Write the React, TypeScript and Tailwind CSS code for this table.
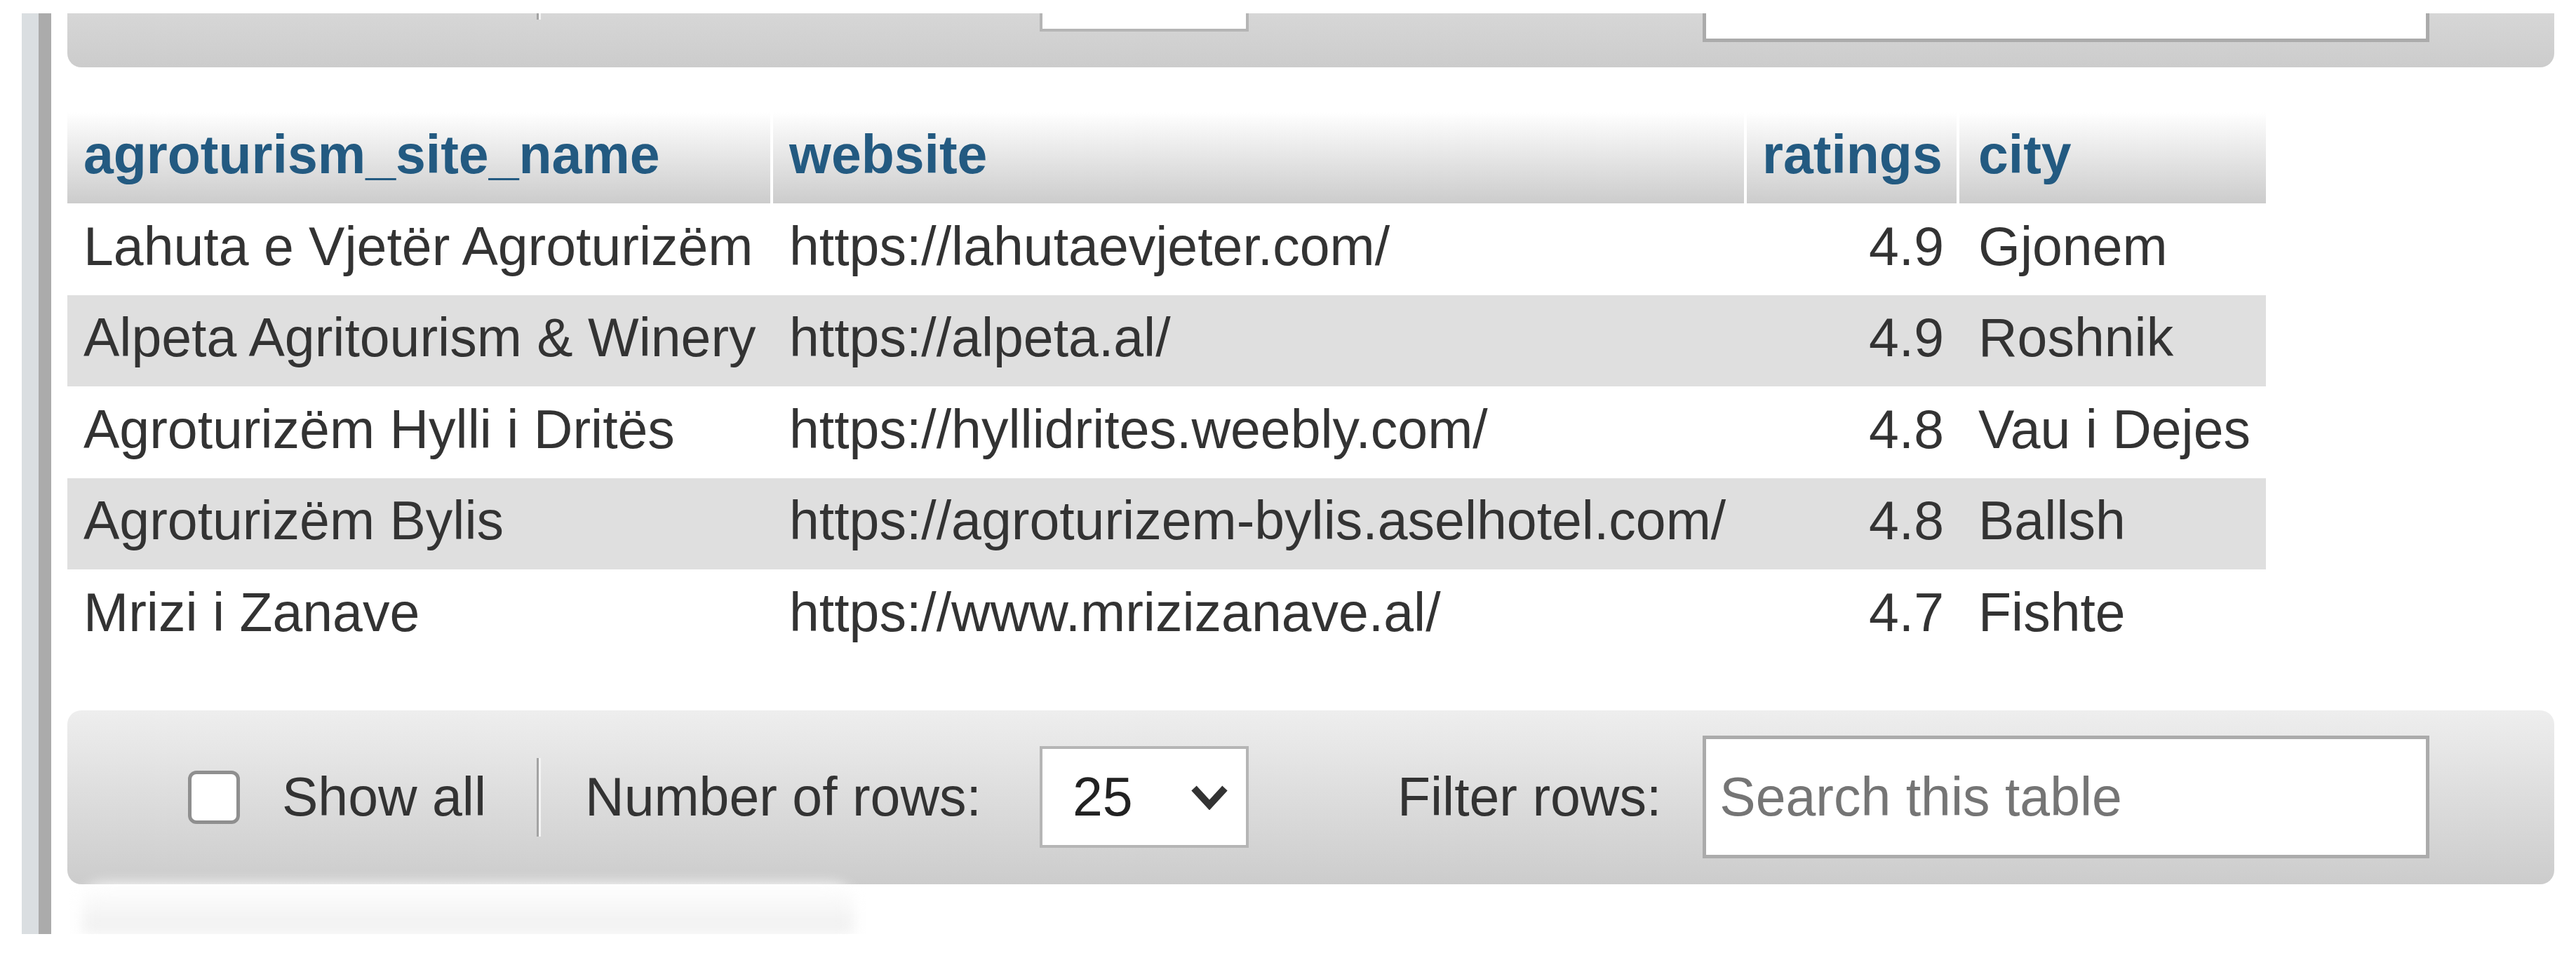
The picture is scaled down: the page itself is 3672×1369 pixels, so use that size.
import React from "react";

type Site = {
  name: string;
  website: string;
  rating: string;
  city: string;
};

const sites: Site[] = [
  { name: "Lahuta e Vjetër Agroturizëm", website: "https://lahutaevjeter.com/", rating: "4.9", city: "Gjonem" },
  { name: "Alpeta Agritourism & Winery", website: "https://alpeta.al/", rating: "4.9", city: "Roshnik" },
  { name: "Agroturizëm Hylli i Dritës", website: "https://hyllidrites.weebly.com/", rating: "4.8", city: "Vau i Dejes" },
  { name: "Agroturizëm Bylis", website: "https://agroturizem-bylis.aselhotel.com/", rating: "4.8", city: "Ballsh" },
  { name: "Mrizi i Zanave", website: "https://www.mrizizanave.al/", rating: "4.7", city: "Fishte" },
];

// the top copy is scrolled mostly out of view, so its labels are only spacers
function Toolbar({ className, clipped }: { className: string; clipped?: boolean }) {
  return (
    <div
      className={`flex h-[248px] w-[3545px] items-center rounded-[20px] bg-gradient-to-b from-[#eeeeee] to-[#cccccc] pl-[172px] text-[77px] text-[#333333] ${className}`}
    >
      <input
        type="checkbox"
        className="h-[76px] w-[74px] shrink-0 appearance-none rounded-[12px] border-[5px] border-[#8f8f8f] bg-white"
      />
      {clipped ? (
        <span className="ml-[60px] w-[291px] shrink-0" />
      ) : (
        <span className="ml-[60px] whitespace-nowrap">Show all</span>
      )}
      <span className="ml-[72px] h-[112px] w-[3px] shrink-0 bg-[#a3a3a3] shadow-[3px_0_0_#f4f4f4]" />
      {clipped ? (
        <span className="ml-[66px] w-[565px] shrink-0" />
      ) : (
        <span className="ml-[66px] whitespace-nowrap">Number of rows:</span>
      )}
      <div className="ml-[83px] flex h-[145px] w-[298px] shrink-0 items-center justify-between border-[4px] border-[#b5b5b5] bg-white pl-[43px] pr-[25px] text-[#222222]">
        {!clipped && <span>25</span>}
        {!clipped && (
          <svg viewBox="0 0 54 36" className="h-[36px] w-[54px]" aria-hidden="true">
            <path d="M5 5 L27 29 L49 5" fill="none" stroke="#333333" strokeWidth="10" strokeLinejoin="miter" />
          </svg>
        )}
      </div>
      {clipped ? (
        <span className="ml-[212px] w-[376px] shrink-0" />
      ) : (
        <span className="ml-[212px] whitespace-nowrap">Filter rows:</span>
      )}
      <input
        placeholder={clipped ? "" : "Search this table"}
        className="ml-[59px] h-[175px] w-[1036px] shrink-0 border-[5px] border-[#ababab] bg-white pl-[19px] text-[77px] text-[#333333] outline-none placeholder:text-[#757575]"
      />
    </div>
  );
}

export default function App() {
  return (
    <div
      className="min-h-screen bg-white pt-[19px]"
      style={{ fontFamily: '"Liberation Sans", Arial, sans-serif' }}
    >
      <div className="flex">
        <div className="ml-[31px] w-[24px] shrink-0 bg-[#dadee1]" />
        <div className="w-[18px] shrink-0 bg-[#ababab]" />
        <div className="ml-[23px] w-[3545px] shrink-0 overflow-hidden">
          <Toolbar className="-mt-[171px]" clipped />

          <table className="mt-[64px] w-[3134px] table-fixed border-separate border-spacing-0 text-[77px]">
            <thead>
              <tr className="h-[130px]">
                <th className="w-[1006px] border-r-[4px] border-white bg-gradient-to-b from-white to-[#cccccc] pb-[8px] pl-[23px] text-left font-bold text-[#235a81]">
                  agroturism_site_name
                </th>
                <th className="w-[1388px] border-r-[4px] border-white bg-gradient-to-b from-white to-[#cccccc] pb-[8px] pl-[23px] text-left font-bold text-[#235a81]">
                  website
                </th>
                <th className="w-[303px] border-r-[4px] border-white bg-gradient-to-b from-white to-[#cccccc] pb-[8px] pl-[22px] text-left font-bold text-[#235a81]">
                  ratings
                </th>
                <th className="w-[437px] bg-gradient-to-b from-white to-[#cccccc] pb-[8px] pl-[27px] text-left font-bold text-[#235a81]">
                  city
                </th>
              </tr>
            </thead>
            <tbody>
              {sites.map((site, index) => (
                <tr
                  key={site.name}
                  className={`h-[130.6px] text-[#333333] ${index % 2 === 1 ? "bg-[#dfdfdf]" : "bg-white"}`}
                >
                  <td className="whitespace-nowrap pb-[8px] pl-[23px]">{site.name}</td>
                  <td className="whitespace-nowrap pb-[8px] pl-[23px]">{site.website}</td>
                  <td className="whitespace-nowrap pb-[8px] pr-[22px] text-right">{site.rating}</td>
                  <td className="whitespace-nowrap pb-[8px] pl-[27px]">{site.city}</td>
                </tr>
              ))}
            </tbody>
          </table>

          <Toolbar className="mt-[70px]" />

          <div className="ml-[21px] h-[71px] w-[1100px] rounded-t-[30px] bg-gradient-to-b from-white to-[#eeeeee] blur-[10px]" />
        </div>
      </div>
    </div>
  );
}
